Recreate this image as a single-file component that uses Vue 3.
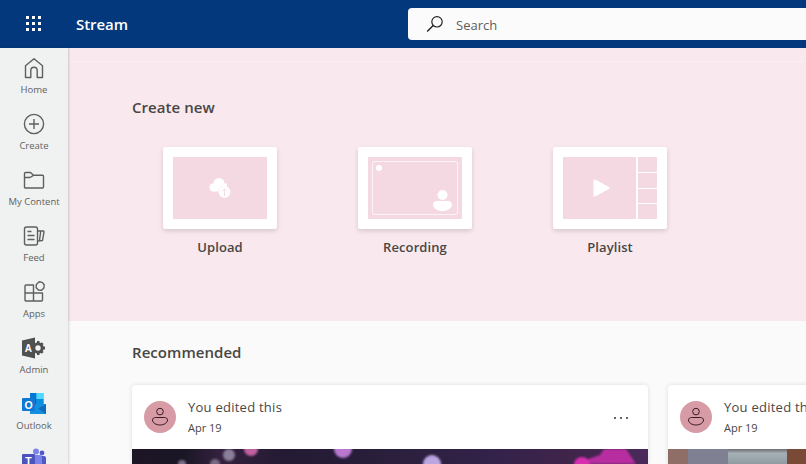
<script setup>
const cards = [
  { id: 'a', width: 516 },
  { id: 'b', width: 300 },
]
const navIcons = ['Home', 'Create', 'My Content', 'Feed', 'Apps', 'Admin', 'Outlook']
</script>

<template>
  <div class="app">
    <header class="topbar">
      <div class="waffle">
        <svg width="18" height="18" viewBox="0 0 18 18" fill="#fff">
          <rect v-for="c in [1,7,13]" :key="'r1'+c" :x="c" y="1" width="3" height="3" />
          <rect v-for="c in [1,7,13]" :key="'r2'+c" :x="c" y="7" width="3" height="3" />
          <rect v-for="c in [1,7,13]" :key="'r3'+c" :x="c" y="13" width="3" height="3" />
        </svg>
      </div>
      <div class="brand">Stream</div>
      <div class="search">
        <svg class="search-icon" width="18" height="18" viewBox="0 0 18 18" fill="none" stroke="#222" stroke-width="1.2">
          <circle cx="11" cy="6.8" r="5.2" />
          <path d="M7.2 10.6 1.2 16.4" stroke-width="1.4" />
        </svg>
        <span class="search-text">Search</span>
      </div>
    </header>

    <div class="body">
      <nav class="rail">
        <div v-for="item in navIcons" :key="item" class="rail-item">
          <svg v-if="item === 'Home'" width="24" height="24" viewBox="0 0 24 24" fill="none" stroke="#5f5f5f" stroke-width="1.4">
            <path d="M3.500 21.500V9.800L12 2.800l8.500 7v11.700h-5.300v-7a3.200 3.200 0 0 0-6.400 0v7z" stroke-linejoin="round" />
          </svg>
          <svg v-else-if="item === 'Create'" width="24" height="24" viewBox="0 0 24 24" fill="none" stroke="#5f5f5f" stroke-width="1.4">
            <circle cx="12" cy="12" r="9.600" />
            <path d="M12 7v10M7 12h10" />
          </svg>
          <svg v-else-if="item === 'My Content'" width="24" height="24" viewBox="0 0 24 24" fill="none" stroke="#5f5f5f" stroke-width="1.4">
            <path d="M2.500 19V5.500a1 1 0 0 1 1-1h5l3 2.800h9a1 1 0 0 1 1 1V19a1 1 0 0 1-1 1h-17a1 1 0 0 1-1-1zM2.500 9.500h5.500l3.500-2.200" stroke-linejoin="round" />
          </svg>
          <svg v-else-if="item === 'Feed'" width="24" height="24" viewBox="0 0 24 24" fill="none" stroke="#5f5f5f" stroke-width="1.4">
            <rect x="2.500" y="3" width="13" height="18" rx="2" />
            <path d="M5.500 7.500h4M5.500 11.500h7M5.500 15.500h7" />
            <path d="M15.500 7h6.200l.3.800-1.500 8.700-5 .5M18.700 7.300l-1.200 9" stroke-linejoin="round" />
          </svg>
          <svg v-else-if="item === 'Apps'" width="24" height="24" viewBox="0 0 24 24" fill="none" stroke="#5f5f5f" stroke-width="1.4">
            <path d="M4 5h7.500v16H4a1 1 0 0 1-1-1V6a1 1 0 0 1 1-1zM3 13h17M11.500 13h9v7a1 1 0 0 1-1 1h-8" stroke-linejoin="round" />
            <path d="M17.200 1.800l3 .6 2 2.400-.3 3.300-2.300 2.100-3.200-.2-2.200-2.300.1-3.300z" fill="#f0f1f1" stroke-linejoin="round" />
          </svg>
          <svg v-else-if="item === 'Admin'" width="24" height="24" viewBox="0 0 24 24">
            <path d="M0 4.500 13 1.500v21L0 19.500z" fill="#505050" />
            <text x="2.800" y="15.500" font-size="10" font-weight="700" fill="#fff" font-family="Liberation Sans, sans-serif">A</text>
            <circle cx="16" cy="12" r="4.200" fill="none" stroke="#505050" stroke-width="3" />
            <path d="M15 5h2.500v3H15zM15 16h2.500v3H15zM19 10.500h4v3h-4zM19.800 6.200l1.800 1.800-2 2-1.800-1.800zM19.800 17.800l1.800-1.800-2-2-1.800 1.800z" fill="#505050" />
          </svg>
          <svg v-else width="24" height="24" viewBox="0 0 24 24">
            <path d="M8 1h13.500v11H8z" fill="#28a8ea" />
            <path d="M8 1h6.500v6H8z" fill="#0078d4" />
            <path d="M14.500 1h7v6h-7z" fill="#50d9ff" />
            <path d="M8 7h6.500v6H8z" fill="#0364b8" />
            <path d="M14.500 7h7v6h-7z" fill="#0a8fe0" />
            <path d="M8 12.500 24 12v10H8z" fill="#1490df" />
            <path d="M24 12v10l-8-5.500z" fill="#0f6cbd" />
            <rect x="0" y="6" width="13" height="13" rx="1" fill="#0f78d4" />
            <text x="6.500" y="16.500" text-anchor="middle" font-size="10.500" font-weight="700" fill="#fff" font-family="Liberation Sans, sans-serif">O</text>
          </svg>
          <span class="rail-label">{{ item }}</span>
        </div>
        <div class="rail-item">
          <svg width="24" height="24" viewBox="0 0 24 24">
            <circle cx="14" cy="3.500" r="3" fill="#7b83eb" />
            <circle cx="20" cy="5" r="2.400" fill="#5059c9" />
            <rect x="14" y="8" width="10" height="14" rx="2" fill="#5059c9" />
            <rect x="7" y="7" width="13" height="17" rx="2" fill="#7b83eb" />
            <rect x="0" y="6" width="13" height="13" rx="1" fill="#4b53bc" />
            <text x="6.500" y="16.500" text-anchor="middle" font-size="10.500" font-weight="700" fill="#fff" font-family="Liberation Sans, sans-serif">T</text>
          </svg>
        </div>
      </nav>

      <main class="content">
        <section class="hero">
          <h2 class="section-title">Create new</h2>
          <div class="tiles">
            <div class="tile">
              <div class="tile-card">
                <div class="tile-art center">
                  <svg width="22" height="22" viewBox="0 0 22 22">
                    <circle cx="10" cy="6.500" r="5.500" fill="#fff" />
                    <circle cx="4.500" cy="10.500" r="4" fill="#fff" />
                    <path d="M4.500 14.500V6.500H18v8z" fill="#fff" />
                    <circle cx="15.500" cy="15" r="6" fill="#fff" stroke="#f5d9e2" stroke-width=".3" />
                    <path d="M15.500 19v-7M13 14.300l2.500-2.500 2.500 2.500" fill="none" stroke="#f5d9e2" stroke-width=".9" />
                  </svg>
                </div>
              </div>
              <span class="tile-label">Upload</span>
            </div>
            <div class="tile">
              <div class="tile-card">
                <div class="tile-art recording">
                  <div class="rec-frame">
                    <span class="rec-dot"></span>
                    <svg class="rec-person" width="19" height="21" viewBox="0 0 19 21" fill="#fff">
                      <circle cx="9.500" cy="5" r="5" />
                      <path d="M4 11h11c2.300 0 4 1.500 4 3.500 0 3.800-4.500 6.500-9.500 6.500S0 18.300 0 14.500C0 12.500 1.700 11 4 11z" />
                    </svg>
                  </div>
                </div>
              </div>
              <span class="tile-label">Recording</span>
            </div>
            <div class="tile">
              <div class="tile-card">
                <div class="playlist">
                  <div class="tile-art center">
                    <svg class="play" width="17" height="18" viewBox="0 0 17 18" fill="#fff">
                      <path d="M1.500 1.500 15.500 9 1.500 16.500z" stroke="#fff" stroke-width="2" stroke-linejoin="round" />
                    </svg>
                  </div>
                  <div class="thumbs">
                    <span v-for="n in 4" :key="n" class="thumb"></span>
                  </div>
                </div>
              </div>
              <span class="tile-label">Playlist</span>
            </div>
          </div>
        </section>

        <section class="recommended">
          <h2 class="section-title">Recommended</h2>
          <div class="cards">
            <article v-for="card in cards" :key="card.id" class="card" :style="{ width: card.width + 'px' }">
              <div class="card-head">
                <div class="avatar">
                  <svg width="16" height="20" viewBox="0 0 16 20" fill="none" stroke="#3b1a22" stroke-width="1">
                    <circle cx="8" cy="4.600" r="3.300" />
                    <path d="M3.500 10.500h9c1.700 0 3 1 3 2.400C15.500 15.800 12 18 8 18S.5 15.800.5 12.900c0-1.400 1.300-2.400 3-2.400z" />
                  </svg>
                </div>
                <div class="meta">
                  <span class="meta-title">You edited this</span>
                  <span class="meta-date">Apr 19</span>
                </div>
                <span v-if="card.id === 'a'" class="more">
                  <i></i><i></i><i></i>
                </span>
              </div>
              <svg v-if="card.id === 'a'" class="thumb-img" width="516" height="15" viewBox="0 0 516 15">
                <defs>
                  <linearGradient id="bokeh" x1="0" x2="1" y1="0" y2="0">
                    <stop offset="0" stop-color="#1c1526" />
                    <stop offset=".1" stop-color="#1a1624" />
                    <stop offset=".17" stop-color="#34213f" />
                    <stop offset=".3" stop-color="#231a33" />
                    <stop offset=".5" stop-color="#2a1f3c" />
                    <stop offset=".7" stop-color="#33224a" />
                    <stop offset=".85" stop-color="#40244a" />
                    <stop offset="1" stop-color="#4a2a5c" />
                  </linearGradient>
                  <filter id="soft" x="-20%" y="-20%" width="140%" height="140%">
                    <feGaussianBlur stdDeviation="1" />
                  </filter>
                </defs>
                <rect width="516" height="15" fill="url(#bokeh)" />
                <g filter="url(#soft)">
                  <circle cx="97" cy="6" r="6" fill="#8a7f9a" />
                  <circle cx="50" cy="15" r="4" fill="#7a6d88" />
                  <circle cx="83" cy="15" r="5" fill="#7c6a85" />
                  <circle cx="119" cy="0" r="7" fill="#c060a0" />
                  <circle cx="211" cy="0" r="9" fill="#b878d0" />
                  <circle cx="300" cy="15" r="9" fill="#bba6e2" />
                  <path d="M442 15 468 6l4-6h22l10 15z" fill="#b82ea0" />
                  <circle cx="450" cy="16" r="8" fill="#d82eb0" />
                </g>
              </svg>
              <svg v-else class="thumb-img" width="300" height="15" viewBox="0 0 300 15">
                <defs>
                  <linearGradient id="sky" x1="0" x2="0" y1="0" y2="1">
                    <stop offset="0" stop-color="#6c7076" />
                    <stop offset=".3" stop-color="#a6b0b6" />
                    <stop offset="1" stop-color="#8f9ba3" />
                  </linearGradient>
                </defs>
                <rect width="20" height="15" fill="#8e6e66" />
                <rect x="20" width="40" height="15" fill="#7f8192" />
                <rect x="60" width="60" height="15" fill="url(#sky)" />
                <rect x="119" width="181" height="15" fill="#7a4a36" />
              </svg>
            </article>
          </div>
        </section>
      </main>
    </div>
  </div>
</template>

<style>
html, body { margin: 0; overflow: hidden; }
</style>

<style scoped>
.app {
  width: 806px;
  height: 464px;
  overflow: hidden;
  display: flex;
  flex-direction: column;
  font-family: "Open Sans", "Noto Sans", sans-serif;
  color: #323130;
}
.topbar {
  flex: 0 0 48px;
  background: #03397c;
  display: flex;
  align-items: center;
  color: #fff;
}
.waffle {
  width: 68px;
  display: flex;
  justify-content: center;
}
.brand {
  margin-left: 8px;
  width: 332px;
  font-size: 15px;
  font-weight: 600;
  letter-spacing: -.05px;
}
.search {
  flex: 1;
  height: 32px;
  background: #fbfbfb;
  border-radius: 4px 0 0 4px;
  display: flex;
  align-items: center;
  color: #605e5c;
  font-size: 13px;
}
.search-icon { margin-left: 18px; margin-right: 12px; }
.search-text { padding-top: 1px; }
.body { flex: 1; display: flex; min-height: 0; }
.rail {
  flex: 0 0 68px;
  background: #f0f1f1;
  box-shadow: 1px 0 2px rgba(0, 0, 0, .16);
  z-index: 1;
  display: flex;
  flex-direction: column;
  align-items: center;
  padding-top: 8px;
  box-sizing: border-box;
  overflow: hidden;
}
.rail-item {
  flex: 0 0 56px;
  display: flex;
  flex-direction: column;
  align-items: center;
}
.rail-label {
  margin-top: 3px;
  font-size: 9.500px;
  line-height: 14px;
  color: #616161;
  white-space: nowrap;
}
.content { flex: 1; min-width: 0; display: flex; flex-direction: column; }
.hero {
  flex: 0 0 273px;
  background: linear-gradient(#f9e8ee 13px, #fbeef2 13px, #fbeef2 14px, #f9e8ee 14px);
  padding: 48px 0 0 64px;
  box-sizing: border-box;
}
.section-title {
  margin: 0;
  font-size: 15px;
  line-height: 22px;
  font-weight: 600;
  letter-spacing: .05px;
  color: #484644;
}
.tiles { display: flex; gap: 81px; margin: 29px 0 0 31px; }
.tile { width: 114px; display: flex; flex-direction: column; align-items: center; }
.tile-card {
  width: 114px;
  height: 82px;
  background: #fff;
  border-radius: 2px;
  box-shadow: 0 2px 5px rgba(0, 0, 0, .14);
  padding: 10px;
  box-sizing: border-box;
}
.tile-art { height: 62px; background: #f5d9e2; box-sizing: border-box; }
.center { display: flex; align-items: center; justify-content: center; }
.recording { padding: 4px; }
.rec-frame {
  height: 100%;
  border: 1px solid #fdf3f6;
  border-radius: 2px;
  box-sizing: border-box;
  display: flex;
  justify-content: space-between;
}
.rec-dot {
  width: 6px;
  height: 6px;
  margin: 3px 0 0 3px;
  border-radius: 50%;
  background: #fff;
}
.rec-person { margin: 28px 5px 0 0; }
.playlist { display: flex; gap: 2px; height: 62px; }
.playlist .tile-art { flex: 1; }
.play { margin-left: 3px; }
.thumbs { flex: 0 0 19px; display: flex; flex-direction: column; gap: 1px; }
.thumb { flex: 1; background: #f5d9e2; }
.tile-label {
  margin-top: 8px;
  font-size: 13px;
  line-height: 20px;
  font-weight: 600;
  letter-spacing: .1px;
  color: #484644;
}
.recommended {
  flex: 1;
  min-height: 0;
  background: #fafafa;
  padding: 20px 0 0 64px;
  overflow: hidden;
}
.cards { display: flex; gap: 20px; margin-top: 22px; }
.card {
  flex: none;
  background: #fff;
  border-radius: 4px 4px 0 0;
  box-shadow: 0 0 4px rgba(0, 0, 0, .13);
  overflow: hidden;
}
.card-head {
  height: 64px;
  display: flex;
  align-items: center;
  padding: 0 12px;
  box-sizing: border-box;
}
.avatar {
  flex: none;
  width: 32px;
  height: 32px;
  border-radius: 50%;
  background: #d79ba6;
  display: flex;
  align-items: center;
  justify-content: center;
}
.meta { flex: 1; margin-left: 12px; display: flex; flex-direction: column; white-space: nowrap; }
.meta-title { font-size: 13px; line-height: 20px; color: #484644; letter-spacing: .25px; }
.meta-date { margin-top: 2px; font-size: 11px; line-height: 18px; color: #484644; }
.more { display: flex; gap: 4px; margin: 2px 8px 0 0; }
.more i { width: 2px; height: 2px; border-radius: 50%; background: #323130; }
.thumb-img { display: block; }
</style>
